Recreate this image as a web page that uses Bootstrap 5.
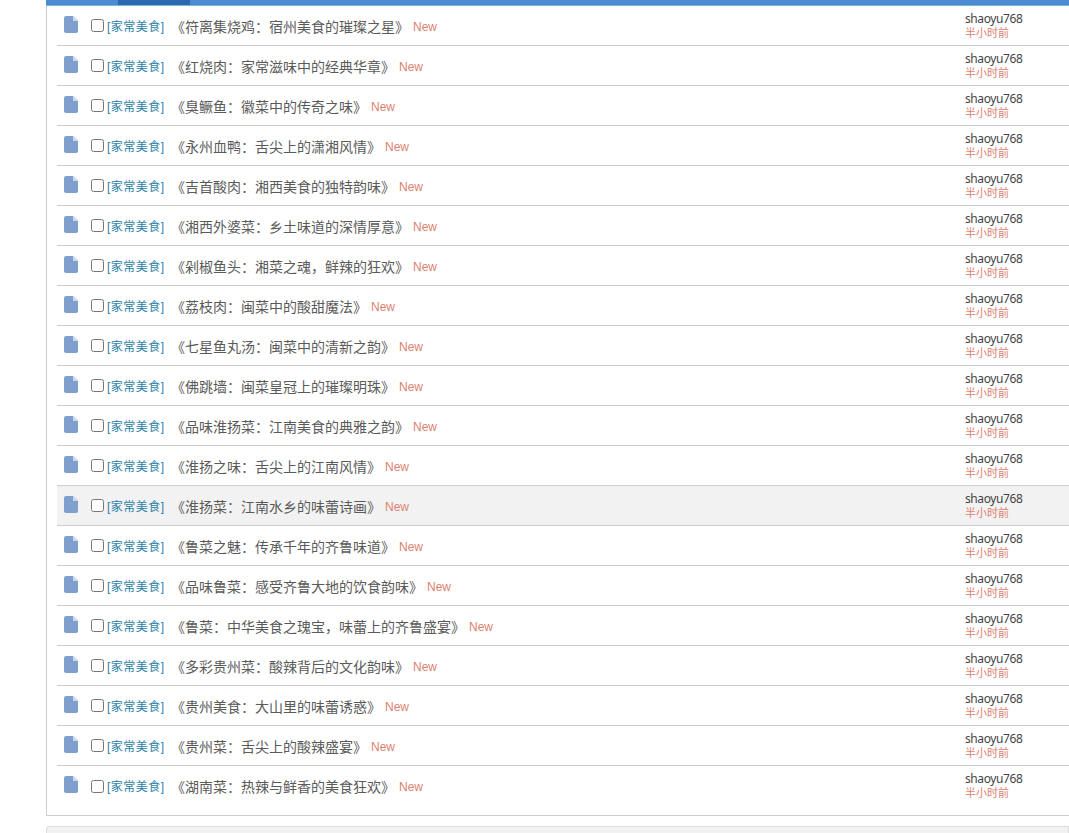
<!DOCTYPE html>
<html lang="zh">
<head>
<meta charset="utf-8">
<title>家常美食</title>
<link href="https://cdn.jsdelivr.net/npm/bootstrap@5.3.0/dist/css/bootstrap.min.css" rel="stylesheet">
<style>
html,body{height:833px;overflow:hidden;background:#fff;}
body{font-family:"Liberation Sans","Noto Sans CJK SC",sans-serif;font-size:12px;color:#444;}
.topbar{height:6px;margin-left:46px;background:#4a8bd2;border-bottom:1px solid #7fb0e2;}
.topbar i{display:block;width:72px;height:5px;margin-left:72px;background:#2a68b0;}
.panel-box{margin-left:46px;height:810px;border-left:1px solid #ccc;border-bottom:1px solid #ccc;padding-left:10px;}
.thread{height:40px;border-bottom:1px solid #ccc;padding:2px 0 0 7px;}
.thread:last-child{border-bottom:0;}
.thread.hovered{background:#f2f2f2;}
.doc{width:14px;height:17px;margin-right:13px;margin-top:-5px;flex:none;}
.sprite{display:none;}
.thread input{width:13px;height:13px;margin:0 3px 0 0;flex:none;position:relative;top:-1px;}
.cat{color:#2a7fa8;width:64px;flex:none;letter-spacing:.5px;}
.ttl{font-size:14px;color:#5a5a5a;line-height:20px;}
.newtag{color:#dc8270;margin-left:4px;}
.who{margin:-2px 0 0 auto;width:104px;flex:none;line-height:14px;}
.who b{display:block;font-weight:400;color:#444;font-family:"Noto Sans",sans-serif;font-size:12px;letter-spacing:-.4px;}
.who span{display:block;color:#dc8270;font-size:11px;}
.next-box{margin:10px 0 0 46px;height:40px;background:#f2f2f2;border:1px solid #ddd;border-radius:3px 0 0 0;}
</style>
</head>
<body>
<svg class="sprite"><symbol id="docicon" viewBox="0 0 14 17"><path fill="#7f9fcf" d="M2 0H9l5 5v10a2 2 0 0 1-2 2H2a2 2 0 0 1-2-2V2a2 2 0 0 1 2-2z"/><path fill="#cddaee" d="M9 0l5 5H9z"/></symbol></svg>
<div class="topbar"><i></i></div>
<div class="panel-box">
<div class="thread d-flex align-items-center"><svg class="doc"><use href="#docicon"/></svg><input type="checkbox"><span class="cat">[家常美食]</span><span class="ttl">《符离集烧鸡：宿州美食的璀璨之星》</span><span class="newtag">New</span><div class="who"><b>shaoyu768</b><span>半小时前</span></div></div>
<div class="thread d-flex align-items-center"><svg class="doc"><use href="#docicon"/></svg><input type="checkbox"><span class="cat">[家常美食]</span><span class="ttl">《红烧肉：家常滋味中的经典华章》</span><span class="newtag">New</span><div class="who"><b>shaoyu768</b><span>半小时前</span></div></div>
<div class="thread d-flex align-items-center"><svg class="doc"><use href="#docicon"/></svg><input type="checkbox"><span class="cat">[家常美食]</span><span class="ttl">《臭鳜鱼：徽菜中的传奇之味》</span><span class="newtag">New</span><div class="who"><b>shaoyu768</b><span>半小时前</span></div></div>
<div class="thread d-flex align-items-center"><svg class="doc"><use href="#docicon"/></svg><input type="checkbox"><span class="cat">[家常美食]</span><span class="ttl">《永州血鸭：舌尖上的潇湘风情》</span><span class="newtag">New</span><div class="who"><b>shaoyu768</b><span>半小时前</span></div></div>
<div class="thread d-flex align-items-center"><svg class="doc"><use href="#docicon"/></svg><input type="checkbox"><span class="cat">[家常美食]</span><span class="ttl">《吉首酸肉：湘西美食的独特韵味》</span><span class="newtag">New</span><div class="who"><b>shaoyu768</b><span>半小时前</span></div></div>
<div class="thread d-flex align-items-center"><svg class="doc"><use href="#docicon"/></svg><input type="checkbox"><span class="cat">[家常美食]</span><span class="ttl">《湘西外婆菜：乡土味道的深情厚意》</span><span class="newtag">New</span><div class="who"><b>shaoyu768</b><span>半小时前</span></div></div>
<div class="thread d-flex align-items-center"><svg class="doc"><use href="#docicon"/></svg><input type="checkbox"><span class="cat">[家常美食]</span><span class="ttl">《剁椒鱼头：湘菜之魂，鲜辣的狂欢》</span><span class="newtag">New</span><div class="who"><b>shaoyu768</b><span>半小时前</span></div></div>
<div class="thread d-flex align-items-center"><svg class="doc"><use href="#docicon"/></svg><input type="checkbox"><span class="cat">[家常美食]</span><span class="ttl">《荔枝肉：闽菜中的酸甜魔法》</span><span class="newtag">New</span><div class="who"><b>shaoyu768</b><span>半小时前</span></div></div>
<div class="thread d-flex align-items-center"><svg class="doc"><use href="#docicon"/></svg><input type="checkbox"><span class="cat">[家常美食]</span><span class="ttl">《七星鱼丸汤：闽菜中的清新之韵》</span><span class="newtag">New</span><div class="who"><b>shaoyu768</b><span>半小时前</span></div></div>
<div class="thread d-flex align-items-center"><svg class="doc"><use href="#docicon"/></svg><input type="checkbox"><span class="cat">[家常美食]</span><span class="ttl">《佛跳墙：闽菜皇冠上的璀璨明珠》</span><span class="newtag">New</span><div class="who"><b>shaoyu768</b><span>半小时前</span></div></div>
<div class="thread d-flex align-items-center"><svg class="doc"><use href="#docicon"/></svg><input type="checkbox"><span class="cat">[家常美食]</span><span class="ttl">《品味淮扬菜：江南美食的典雅之韵》</span><span class="newtag">New</span><div class="who"><b>shaoyu768</b><span>半小时前</span></div></div>
<div class="thread d-flex align-items-center"><svg class="doc"><use href="#docicon"/></svg><input type="checkbox"><span class="cat">[家常美食]</span><span class="ttl">《淮扬之味：舌尖上的江南风情》</span><span class="newtag">New</span><div class="who"><b>shaoyu768</b><span>半小时前</span></div></div>
<div class="thread hovered d-flex align-items-center"><svg class="doc"><use href="#docicon"/></svg><input type="checkbox"><span class="cat">[家常美食]</span><span class="ttl">《淮扬菜：江南水乡的味蕾诗画》</span><span class="newtag">New</span><div class="who"><b>shaoyu768</b><span>半小时前</span></div></div>
<div class="thread d-flex align-items-center"><svg class="doc"><use href="#docicon"/></svg><input type="checkbox"><span class="cat">[家常美食]</span><span class="ttl">《鲁菜之魅：传承千年的齐鲁味道》</span><span class="newtag">New</span><div class="who"><b>shaoyu768</b><span>半小时前</span></div></div>
<div class="thread d-flex align-items-center"><svg class="doc"><use href="#docicon"/></svg><input type="checkbox"><span class="cat">[家常美食]</span><span class="ttl">《品味鲁菜：感受齐鲁大地的饮食韵味》</span><span class="newtag">New</span><div class="who"><b>shaoyu768</b><span>半小时前</span></div></div>
<div class="thread d-flex align-items-center"><svg class="doc"><use href="#docicon"/></svg><input type="checkbox"><span class="cat">[家常美食]</span><span class="ttl">《鲁菜：中华美食之瑰宝，味蕾上的齐鲁盛宴》</span><span class="newtag">New</span><div class="who"><b>shaoyu768</b><span>半小时前</span></div></div>
<div class="thread d-flex align-items-center"><svg class="doc"><use href="#docicon"/></svg><input type="checkbox"><span class="cat">[家常美食]</span><span class="ttl">《多彩贵州菜：酸辣背后的文化韵味》</span><span class="newtag">New</span><div class="who"><b>shaoyu768</b><span>半小时前</span></div></div>
<div class="thread d-flex align-items-center"><svg class="doc"><use href="#docicon"/></svg><input type="checkbox"><span class="cat">[家常美食]</span><span class="ttl">《贵州美食：大山里的味蕾诱惑》</span><span class="newtag">New</span><div class="who"><b>shaoyu768</b><span>半小时前</span></div></div>
<div class="thread d-flex align-items-center"><svg class="doc"><use href="#docicon"/></svg><input type="checkbox"><span class="cat">[家常美食]</span><span class="ttl">《贵州菜：舌尖上的酸辣盛宴》</span><span class="newtag">New</span><div class="who"><b>shaoyu768</b><span>半小时前</span></div></div>
<div class="thread d-flex align-items-center"><svg class="doc"><use href="#docicon"/></svg><input type="checkbox"><span class="cat">[家常美食]</span><span class="ttl">《湖南菜：热辣与鲜香的美食狂欢》</span><span class="newtag">New</span><div class="who"><b>shaoyu768</b><span>半小时前</span></div></div>
</div>
<div class="next-box"></div>
</body>
</html>
